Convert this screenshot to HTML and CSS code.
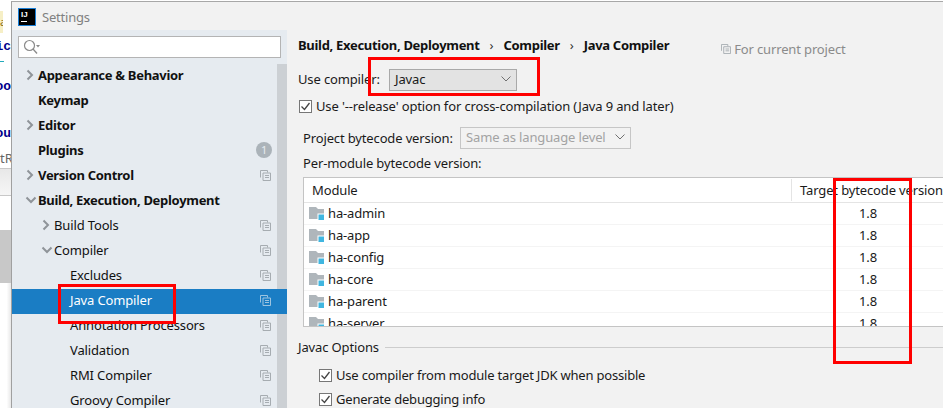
FILE: index.html
```html
<!DOCTYPE html>
<html lang="en">
<head>
<meta charset="utf-8">
<title>Settings</title>
<link rel="stylesheet" href="styles.css">
</head>
<body>
<svg class="defs" width="0" height="0" aria-hidden="true">
  <symbol id="right" viewBox="0 0 8 12"><path d="M1.5 1.5 6 6l-4.500 4.500" fill="none" stroke="currentColor" stroke-width="2"/></symbol>
  <symbol id="down" viewBox="0 0 12 8"><path d="M1.500 1.500 6 6l4.500-4.500" fill="none" stroke="currentColor" stroke-width="2"/></symbol>
  <symbol id="copy" viewBox="0 0 11 11"><path d="M.5 7.500V.5h7v2M3 3h7.500v7.500H3z" fill="none" stroke="currentColor"/><path d="M5 5.500h4M5 7.500h4" stroke="currentColor"/></symbol>
  <symbol id="folder" viewBox="0 0 16 14"><path d="M0 0h7l2 2h6v10H0z" fill="#afb6bb"/><rect x="9" y="7" width="6.500" height="6.500" fill="#40b6e0" stroke="#fff"/></symbol>
  <symbol id="check" viewBox="0 0 13 13"><rect x=".5" y=".5" width="12" height="12" fill="#fff" stroke="#777"/><path d="M2.500 6.500 5.500 9.500 10.500 3" fill="none" stroke="#444" stroke-width="1.300"/></symbol>
  <symbol id="chev" viewBox="0 0 10 6"><path d="M.5.500 5 5l4.500-4.500" fill="none" stroke="currentColor"/></symbol>
</svg>

<div class="desktop">
  <aside class="behind">
    <div class="bg-top">
      <span class="bg-note">a</span>
      <span class="bg-word bg-lc">Lic</span>
      <span class="bg-cyan"></span>
      <span class="bg-word bg-oo">boo</span>
      <span class="bg-word bg-ou">You</span>
    </div>
    <div class="bg-tab">tR</div>
    <div class="bg-strip"></div>
    <div class="bg-white"></div>
    <div class="bg-gray"></div>
    <div class="bg-white2"></div>
  </aside>

  <section class="window">
    <header class="titlebar">
      <span class="logo"><span class="logo-text">IJ</span><span class="logo-bar"></span></span>
      <span class="title">Settings</span>
    </header>
    <div class="body">
      <nav class="sidebar">
        <div class="search">
          <svg class="search-icon" width="18" height="16" viewBox="0 0 18 16"><circle cx="6.500" cy="6.500" r="5" fill="none" stroke="#8a8a8a" stroke-width="1.200"/><path d="m10 10 4 4.500" stroke="#8a8a8a" stroke-width="1.300"/><path d="M13 6h4l-2 2.500z" fill="#8a8a8a"/></svg>
        </div>
        <ul class="tree">
          <li class="row bold"><svg class="arrow a-right"><use href="#right"/></svg><span>Appearance &amp; Behavior</span></li>
          <li class="row bold"><span class="spacer"></span><span>Keymap</span></li>
          <li class="row bold"><svg class="arrow a-right"><use href="#right"/></svg><span>Editor</span></li>
          <li class="row bold"><span class="spacer"></span><span>Plugins</span><span class="badge">1</span></li>
          <li class="row bold"><svg class="arrow a-right"><use href="#right"/></svg><span>Version Control</span><svg class="copy"><use href="#copy"/></svg></li>
          <li class="row bold"><svg class="arrow a-down"><use href="#down"/></svg><span>Build, Execution, Deployment</span></li>
          <li class="row d2"><svg class="arrow a-right"><use href="#right"/></svg><span>Build Tools</span><svg class="copy"><use href="#copy"/></svg></li>
          <li class="row d2"><svg class="arrow a-down"><use href="#down"/></svg><span>Compiler</span><svg class="copy"><use href="#copy"/></svg></li>
          <li class="row d3"><span>Excludes</span><svg class="copy"><use href="#copy"/></svg></li>
          <li class="row d3 selected"><span>Java Compiler</span><svg class="copy"><use href="#copy"/></svg></li>
          <li class="row d3"><span>Annotation Processors</span><svg class="copy"><use href="#copy"/></svg></li>
          <li class="row d3"><span>Validation</span><svg class="copy"><use href="#copy"/></svg></li>
          <li class="row d3"><span>RMI Compiler</span><svg class="copy"><use href="#copy"/></svg></li>
          <li class="row d3"><span>Groovy Compiler</span><svg class="copy"><use href="#copy"/></svg></li>
        </ul>
      </nav>

      <main class="main">
        <div class="crumbs">
          <b>Build, Execution, Deployment</b><span class="sep">›</span><b>Compiler</b><span class="sep">›</span><b>Java Compiler</b>
          <span class="project"><svg class="copy"><use href="#copy"/></svg>For current project</span>
        </div>
        <div class="compiler-row">
          <label>Use compiler:</label>
          <div class="combo combo-on"><span>Javac</span><svg class="chev"><use href="#chev"/></svg></div>
        </div>
        <div class="check-row"><svg class="check"><use href="#check"/></svg><span>Use '--release' option for cross-compilation (Java 9 and later)</span></div>
        <div class="inset">
          <div class="project-row">
            <label>Project bytecode version:</label>
            <div class="combo combo-off"><span>Same as language level</span><svg class="chev"><use href="#chev"/></svg></div>
          </div>
          <div class="per-module">Per-module bytecode version:</div>
          <div class="table">
            <div class="thead"><span class="c-module">Module</span><span class="c-target">Target bytecode version</span></div>
            <div class="tr"><span class="c-module"><svg class="folder"><use href="#folder"/></svg>ha-admin</span><span class="c-val">1.8</span></div>
            <div class="tr"><span class="c-module"><svg class="folder"><use href="#folder"/></svg>ha-app</span><span class="c-val">1.8</span></div>
            <div class="tr"><span class="c-module"><svg class="folder"><use href="#folder"/></svg>ha-config</span><span class="c-val">1.8</span></div>
            <div class="tr"><span class="c-module"><svg class="folder"><use href="#folder"/></svg>ha-core</span><span class="c-val">1.8</span></div>
            <div class="tr"><span class="c-module"><svg class="folder"><use href="#folder"/></svg>ha-parent</span><span class="c-val">1.8</span></div>
            <div class="tr"><span class="c-module"><svg class="folder"><use href="#folder"/></svg>ha-server</span><span class="c-val">1.8</span></div>
          </div>
        </div>
        <div class="group-title"><span>Javac Options</span><i></i></div>
        <div class="opt"><svg class="check"><use href="#check"/></svg><span>Use compiler from module target JDK when possible</span></div>
        <div class="opt"><svg class="check"><use href="#check"/></svg><span>Generate debugging info</span></div>
      </main>
    </div>
  </section>
</div>

<div class="mark mark-java"></div>
<div class="mark mark-javac"></div>
<div class="mark mark-target"></div>
</body>
</html>
```
FILE: styles.css
```css
* { box-sizing: border-box; }
html, body { margin: 0; padding: 0; }
body {
  width: 943px; height: 408px; overflow: hidden; position: relative;
  background: #fff; color: #1a1a1a;
  font: 13px/18px "Noto Sans", "Open Sans", sans-serif;
  letter-spacing: -.14px;
}
.defs { position: absolute; }
ul { list-style: none; margin: 0; padding: 0; }

.desktop { display: flex; height: 408px; }

/* window behind the dialog */
.behind { width: 11px; flex: none; display: flex; flex-direction: column; overflow: hidden; letter-spacing: 0; }
.bg-top { height: 149px; flex: none; display: flex; flex-direction: column; align-items: flex-end; white-space: nowrap; padding-top: 11px; }
.bg-note { width: 3px; height: 22px; background: #f6efc6; color: #8a6a10; font-size: 11px; line-height: 22px; flex: none; margin-bottom: 2px; overflow: hidden; align-self: flex-start; }
.bg-word { color: #00008b; font-weight: 700; flex: none; line-height: 18px; font-family: "Liberation Mono", monospace; font-size: 13px; }
.bg-lc { margin-top: 3px; }
.bg-cyan { width: 4px; height: 1px; background: #2ab; align-self: flex-start; margin-top: 5px; flex: none; }
.bg-oo { margin-top: 16px; }
.bg-ou { margin-top: 29px; }
.bg-tab { height: 20px; flex: none; color: #666; text-align: right; white-space: nowrap; line-height: 18px; background: #fff; border-bottom: 1px solid #c8c8c8; }
.bg-strip { height: 27px; flex: none; background: linear-gradient(#e8e8e8, #f6f6f6); border-bottom: 1px solid #c8c8c8; }
.bg-white { height: 34px; flex: none; background: #fff; }
.bg-gray { height: 53px; flex: none; background: #c8c8c8; }
.bg-white2 { flex: 1; background: linear-gradient(90deg, #fff 60%, #e8e8e8); }

/* dialog */
.window { flex: 1; min-width: 0; margin-top: 1px; border-top: 1px solid #a8a8a8; border-left: 1px solid #a0a0a0; background: #f2f2f2; display: flex; flex-direction: column; overflow: hidden; }
.titlebar { height: 28px; flex: none; display: flex; align-items: center; padding: 2px 0 0 7px; gap: 7px; }
.logo { width: 16px; height: 16px; background: #000; outline: 1px solid #1a7fd6; display: flex; flex-direction: column; padding: 1px 2px; flex: none; }
.logo-text { color: #fff; font: 700 8px/9px "Liberation Sans", sans-serif; letter-spacing: 0; }
.logo-bar { width: 6px; height: 1px; background: #fff; margin-top: 2px; }
.title { color: #808080; font-size: 13px; letter-spacing: -.2px; }

.body { flex: 1; min-height: 0; display: flex; }
.sidebar { width: 275px; flex: none; background: #e6ebf0; display: flex; flex-direction: column; padding-top: 6px; }
.search { height: 22px; margin: 0 6px; background: #fff; border: 1px solid #b4b4b4; display: flex; align-items: center; padding-left: 4px; flex: none; }
.tree { margin-top: 6px; background: linear-gradient(#ccd0d4, #ccd0d4) right top / 10px 100% no-repeat; }
.row { height: 25px; display: flex; align-items: center; padding: 0 16px 3px 13px; color: #111; white-space: nowrap; }
.row.bold { font-weight: 700; letter-spacing: -.3px; }
.row.d2 { padding-left: 29px; }
.row.d3 { padding-left: 58px; }
.row.selected { background: #1a7dc4; color: #fff; }
.arrow { flex: none; color: #8f9499; }
.a-right { width: 8px; height: 12px; margin-right: 4px; margin-left: 1px; }
.a-down { width: 12px; height: 8px; margin-right: 1px; }
.spacer { width: 13px; flex: none; }
.copy { width: 11px; height: 11px; color: #a6acb1; flex: none; margin-left: auto; }
.row.selected .copy { color: #9cc4e0; }
.badge { margin-left: auto; margin-right: -1px; width: 16px; height: 16px; border-radius: 50%; background: #abb3b9; color: #e6ebf0; font-size: 11px; line-height: 16px; text-align: center; font-weight: 400; }

/* main pane */
.main { flex: 1; min-width: 0; padding-left: 11px; overflow: hidden; }
.crumbs { height: 19px; margin-top: 5px; display: flex; align-items: center; white-space: nowrap; color: #111; }
.crumbs b { letter-spacing: -.3px; }
.crumbs .sep { margin: 0 10px; color: #333; font-size: 13px; }
.project { display: flex; align-items: center; gap: 3px; color: #8b8b8b; margin-left: 52px; margin-top: 8px; }
.project .copy { margin: 0; width: 10px; height: 10px; }
.compiler-row { display: flex; align-items: center; height: 22px; margin-top: 15px; }
.compiler-row label { width: 91px; flex: none; padding-bottom: 2px; }
.combo { height: 22px; display: flex; align-items: center; justify-content: space-between; padding: 0 5px 2px; white-space: nowrap; flex: none; }
.combo-on { width: 128px; background: #e3e3e3; border: 1px solid #a9a9a9; }
.combo-off { width: 171px; background: #f2f2f2; border: 1px solid #c6c6c6; color: #a3a3a3; }
.chev { width: 10px; height: 6px; color: #707070; }
.check { width: 13px; height: 13px; flex: none; }
.check-row { display: flex; align-items: center; gap: 4px; height: 18px; margin-top: 6px; padding-left: 1px; white-space: nowrap; }
.inset { padding-left: 5px; }
.project-row { display: flex; align-items: center; height: 22px; margin-top: 12px; white-space: nowrap; }
.project-row label { width: 157px; flex: none; }
.per-module { height: 18px; line-height: 18px; margin-top: 5px; }
.table { margin-top: 5px; width: 660px; height: 150px; background: #fff; border: 1px solid #c4c4c4; overflow: hidden; }
.thead { height: 25px; display: flex; align-items: center; border-bottom: 1px solid #e4e4e4; }
.c-module { width: 487px; flex: none; padding-left: 8px; display: flex; align-items: center; white-space: nowrap; }
.c-target { border-left: 1px solid #e4e4e4; padding-left: 8px; height: 22px; line-height: 22px; white-space: nowrap; margin-top: -1px; }
.tr { height: 22px; display: flex; align-items: center; padding-bottom: 2px; border-bottom: 1px solid #f4f4f4; }
.tr .c-module { padding-left: 5px; }
.folder { width: 16px; height: 14px; margin: 2px 3px 0 0; flex: none; }
.c-val { width: 154px; text-align: center; }
.group-title { display: flex; align-items: center; height: 18px; margin-top: 11px; gap: 6px; }
.group-title i { flex: 1; height: 1px; background: #cdcdcd; }
.opt { display: flex; align-items: center; gap: 4px; height: 18px; margin-top: 10px; padding-left: 21px; white-space: nowrap; letter-spacing: -.2px; }
.opt + .opt { margin-top: 6px; }

/* red annotation boxes */
.mark { position: absolute; border: 3px solid #f00; pointer-events: none; }
.mark-java { left: 58px; top: 284px; width: 118px; height: 40px; }
.mark-javac { left: 368px; top: 57px; width: 172px; height: 39px; }
.mark-target { left: 833px; top: 178px; width: 79px; height: 186px; }
```
